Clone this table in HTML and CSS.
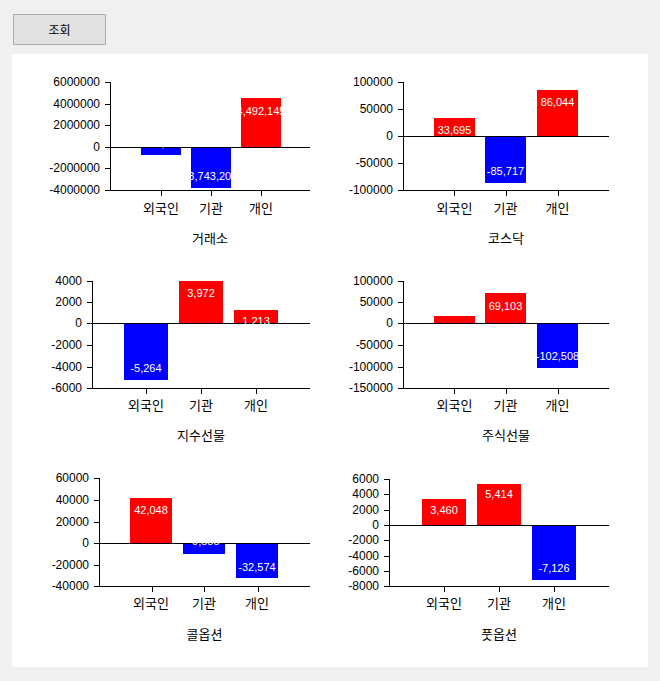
FILE: index.html
```html
<!DOCTYPE html>
<html lang="ko">
<head>
<meta charset="utf-8">
<title>조회</title>
<link rel="stylesheet" href="styles.css">
</head>
<body>
<div class="toolbar"><button class="btn">조회</button></div>
<div class="panel">
  <!-- 거래소 -->
  <svg class="chart" width="318" height="198" viewBox="0 0 318 198" shape-rendering="crispEdges">
    <rect class="bar neg" x="129" y="94" width="40" height="7"/>
    <rect class="bar neg" x="179" y="94" width="40" height="40"/>
    <rect class="bar pos" x="229" y="44" width="40" height="49"/>
    <rect class="ln" x="98" y="28" width="1" height="109"/>
    <rect class="ln" x="98" y="136" width="200" height="1"/>
    <rect class="ln" x="98" y="93" width="200" height="1"/>
    <rect class="ln" x="93" y="28" width="5" height="1"/><rect class="ln" x="93" y="50" width="5" height="1"/><rect class="ln" x="93" y="71" width="5" height="1"/><rect class="ln" x="93" y="93" width="5" height="1"/><rect class="ln" x="93" y="114" width="5" height="1"/><rect class="ln" x="93" y="136" width="5" height="1"/>
    <rect class="ln" x="149" y="137" width="1" height="5"/><rect class="ln" x="199" y="137" width="1" height="5"/><rect class="ln" x="249" y="137" width="1" height="5"/>
    <text class="tick" x="88" y="28">6000000</text><text class="tick" x="88" y="50">4000000</text><text class="tick" x="88" y="71">2000000</text><text class="tick" x="88" y="93">0</text><text class="tick" x="88" y="114">-2000000</text><text class="tick" x="88" y="136">-4000000</text>
    <text class="val" x="149" y="89">-743,886</text><text class="val" x="199" y="122">-3,743,204</text><text class="val" x="249" y="57">4,492,145</text>
    <text class="cat" x="149" y="153">외국인</text><text class="cat" x="199" y="153">기관</text><text class="cat" x="249" y="153">개인</text>
    <text class="ttl" x="198" y="183">거래소</text>
  </svg>
  <!-- 코스닥 -->
  <svg class="chart" width="318" height="198" viewBox="0 0 318 198" shape-rendering="crispEdges">
    <rect class="bar pos" x="104" y="64" width="41" height="18"/>
    <rect class="bar neg" x="155" y="83" width="41" height="46"/>
    <rect class="bar pos" x="207" y="36" width="41" height="46"/>
    <rect class="ln" x="73" y="28" width="1" height="109"/>
    <rect class="ln" x="73" y="136" width="206" height="1"/>
    <rect class="ln" x="73" y="82" width="206" height="1"/>
    <rect class="ln" x="68" y="28" width="5" height="1"/><rect class="ln" x="68" y="55" width="5" height="1"/><rect class="ln" x="68" y="82" width="5" height="1"/><rect class="ln" x="68" y="109" width="5" height="1"/><rect class="ln" x="68" y="136" width="5" height="1"/>
    <rect class="ln" x="124" y="137" width="1" height="5"/><rect class="ln" x="176" y="137" width="1" height="5"/><rect class="ln" x="228" y="137" width="1" height="5"/>
    <text class="tick" x="63" y="28">100000</text><text class="tick" x="63" y="55">50000</text><text class="tick" x="63" y="82">0</text><text class="tick" x="63" y="109">-50000</text><text class="tick" x="63" y="136">-100000</text>
    <text class="val" x="124.5" y="76">33,695</text><text class="val" x="175.5" y="117">-85,717</text><text class="val" x="227.5" y="48">86,044</text>
    <text class="cat" x="124.5" y="153">외국인</text><text class="cat" x="175.5" y="153">기관</text><text class="cat" x="227.5" y="153">개인</text>
    <text class="ttl" x="176" y="183">코스닥</text>
  </svg>
  <!-- 지수선물 -->
  <svg class="chart" width="318" height="198" viewBox="0 0 318 198" shape-rendering="crispEdges">
    <rect class="bar neg" x="112" y="71" width="44" height="56"/>
    <rect class="bar pos" x="167" y="28" width="44" height="42"/>
    <rect class="bar pos" x="222" y="57" width="44" height="13"/>
    <rect class="ln" x="80" y="28" width="1" height="108"/>
    <rect class="ln" x="80" y="135" width="218" height="1"/>
    <rect class="ln" x="80" y="70" width="218" height="1"/>
    <rect class="ln" x="75" y="28" width="5" height="1"/><rect class="ln" x="75" y="49" width="5" height="1"/><rect class="ln" x="75" y="70" width="5" height="1"/><rect class="ln" x="75" y="92" width="5" height="1"/><rect class="ln" x="75" y="114" width="5" height="1"/><rect class="ln" x="75" y="135" width="5" height="1"/>
    <rect class="ln" x="134" y="136" width="1" height="5"/><rect class="ln" x="189" y="136" width="1" height="5"/><rect class="ln" x="244" y="136" width="1" height="5"/>
    <text class="tick" x="70" y="28">4000</text><text class="tick" x="70" y="49">2000</text><text class="tick" x="70" y="70">0</text><text class="tick" x="70" y="92">-2000</text><text class="tick" x="70" y="114">-4000</text><text class="tick" x="70" y="135">-6000</text>
    <text class="val" x="134" y="115">-5,264</text><text class="val" x="189" y="40">3,972</text><text class="val" x="244" y="68">1,213</text>
    <text class="cat" x="134" y="151">외국인</text><text class="cat" x="189" y="151">기관</text><text class="cat" x="244" y="151">개인</text>
    <text class="ttl" x="189" y="181">지수선물</text>
  </svg>
  <!-- 주식선물 -->
  <svg class="chart" width="318" height="198" viewBox="0 0 318 198" shape-rendering="crispEdges">
    <rect class="bar pos" x="104" y="63" width="41" height="7"/>
    <rect class="bar pos" x="155" y="40" width="41" height="30"/>
    <rect class="bar neg" x="207" y="71" width="41" height="44"/>
    <rect class="ln" x="73" y="28" width="1" height="108"/>
    <rect class="ln" x="73" y="135" width="206" height="1"/>
    <rect class="ln" x="73" y="70" width="206" height="1"/>
    <rect class="ln" x="68" y="28" width="5" height="1"/><rect class="ln" x="68" y="49" width="5" height="1"/><rect class="ln" x="68" y="70" width="5" height="1"/><rect class="ln" x="68" y="92" width="5" height="1"/><rect class="ln" x="68" y="114" width="5" height="1"/><rect class="ln" x="68" y="135" width="5" height="1"/>
    <rect class="ln" x="124" y="136" width="1" height="5"/><rect class="ln" x="176" y="136" width="1" height="5"/><rect class="ln" x="228" y="136" width="1" height="5"/>
    <text class="tick" x="63" y="28">100000</text><text class="tick" x="63" y="49">50000</text><text class="tick" x="63" y="70">0</text><text class="tick" x="63" y="92">-50000</text><text class="tick" x="63" y="114">-100000</text><text class="tick" x="63" y="135">-150000</text>
    <text class="val" x="124.5" y="77">16,438</text><text class="val" x="175.5" y="53">69,103</text><text class="val" x="227.5" y="103">-102,508</text>
    <text class="cat" x="124.5" y="151">외국인</text><text class="cat" x="175.5" y="151">기관</text><text class="cat" x="227.5" y="151">개인</text>
    <text class="ttl" x="176" y="181">주식선물</text>
  </svg>
  <!-- 콜옵션 -->
  <svg class="chart" width="318" height="198" viewBox="0 0 318 198" shape-rendering="crispEdges">
    <rect class="bar pos" x="118" y="47" width="42" height="45"/>
    <rect class="bar neg" x="171" y="93" width="42" height="10"/>
    <rect class="bar neg" x="224" y="93" width="42" height="34"/>
    <rect class="ln" x="87" y="27" width="1" height="109"/>
    <rect class="ln" x="87" y="135" width="211" height="1"/>
    <rect class="ln" x="87" y="92" width="211" height="1"/>
    <rect class="ln" x="82" y="27" width="5" height="1"/><rect class="ln" x="82" y="49" width="5" height="1"/><rect class="ln" x="82" y="71" width="5" height="1"/><rect class="ln" x="82" y="92" width="5" height="1"/><rect class="ln" x="82" y="114" width="5" height="1"/><rect class="ln" x="82" y="135" width="5" height="1"/>
    <rect class="ln" x="140" y="136" width="1" height="5"/><rect class="ln" x="192" y="136" width="1" height="5"/><rect class="ln" x="246" y="136" width="1" height="5"/>
    <text class="tick" x="77" y="27">60000</text><text class="tick" x="77" y="49">40000</text><text class="tick" x="77" y="71">20000</text><text class="tick" x="77" y="92">0</text><text class="tick" x="77" y="114">-20000</text><text class="tick" x="77" y="135">-40000</text>
    <text class="val" x="139" y="59">42,048</text><text class="val" x="192" y="90">-9,585</text><text class="val" x="245" y="116">-32,574</text>
    <text class="cat" x="139" y="151">외국인</text><text class="cat" x="192" y="151">기관</text><text class="cat" x="245" y="151">개인</text>
    <text class="ttl" x="192.5" y="182">콜옵션</text>
  </svg>
  <!-- 풋옵션 -->
  <svg class="chart" width="318" height="198" viewBox="0 0 318 198" shape-rendering="crispEdges">
    <rect class="bar pos" x="92" y="48" width="44" height="26"/>
    <rect class="bar pos" x="147" y="33" width="44" height="41"/>
    <rect class="bar neg" x="202" y="75" width="44" height="54"/>
    <rect class="ln" x="59" y="28" width="1" height="108"/>
    <rect class="ln" x="59" y="135" width="220" height="1"/>
    <rect class="ln" x="59" y="74" width="220" height="1"/>
    <rect class="ln" x="54" y="28" width="5" height="1"/><rect class="ln" x="54" y="43" width="5" height="1"/><rect class="ln" x="54" y="59" width="5" height="1"/><rect class="ln" x="54" y="74" width="5" height="1"/><rect class="ln" x="54" y="89" width="5" height="1"/><rect class="ln" x="54" y="105" width="5" height="1"/><rect class="ln" x="54" y="120" width="5" height="1"/><rect class="ln" x="54" y="135" width="5" height="1"/>
    <rect class="ln" x="114" y="136" width="1" height="5"/><rect class="ln" x="169" y="136" width="1" height="5"/><rect class="ln" x="224" y="136" width="1" height="5"/>
    <text class="tick" x="49" y="28">6000</text><text class="tick" x="49" y="43">4000</text><text class="tick" x="49" y="59">2000</text><text class="tick" x="49" y="74">0</text><text class="tick" x="49" y="89">-2000</text><text class="tick" x="49" y="105">-4000</text><text class="tick" x="49" y="120">-6000</text><text class="tick" x="49" y="135">-8000</text>
    <text class="val" x="114" y="59">3,460</text><text class="val" x="169" y="43">5,414</text><text class="val" x="224" y="117">-7,126</text>
    <text class="cat" x="114" y="151">외국인</text><text class="cat" x="169" y="151">기관</text><text class="cat" x="224" y="151">개인</text>
    <text class="ttl" x="169" y="182">풋옵션</text>
  </svg>
</div>
</body>
</html>
```

FILE: styles.css
```css
html, body {
  margin: 0;
  padding: 0;
}
body {
  background: #f0f0f0;
  font-family: "Liberation Sans", Arial, sans-serif;
  width: 660px;
  height: 681px;
  overflow: hidden;
}
.toolbar {
  padding: 14px 0 0 13px;
  height: 54px;
  box-sizing: border-box;
}
.btn {
  display: block;
  width: 93px;
  height: 31px;
  padding: 0;
  margin: 0;
  border: 1px solid #adadad;
  background: #e1e1e1;
  color: #000;
  font-family: "Noto Sans CJK KR", "Noto Sans", sans-serif;
  font-size: 12px;
  line-height: 29px;
}
.panel {
  margin-left: 12px;
  width: 636px;
  height: 613px;
  background: #fff;
  display: grid;
  grid-template-columns: 318px 318px;
  grid-template-rows: 199px 198px 216px;
}
.chart {
  display: block;
}
.ln {
  fill: #000;
}
.bar.pos {
  fill: #ff0000;
}
.bar.neg {
  fill: #0000ff;
}
.tick {
  font-family: "Liberation Sans", Arial, sans-serif;
  font-size: 12px;
  fill: #000;
  text-anchor: end;
  dominant-baseline: central;
}
.val {
  font-family: "Liberation Sans", Arial, sans-serif;
  font-size: 11px;
  fill: #fff;
  text-anchor: middle;
  dominant-baseline: central;
}
.cat,
.ttl {
  font-family: "Noto Sans CJK KR", "Noto Sans", sans-serif;
  font-size: 13px;
  fill: #000;
  text-anchor: middle;
  dominant-baseline: central;
}
```
